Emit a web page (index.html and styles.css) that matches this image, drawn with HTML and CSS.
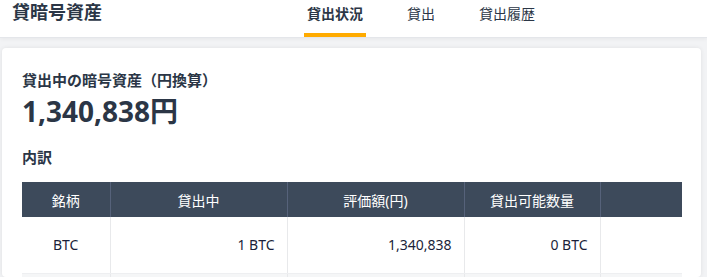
FILE: index.html
```html
<!DOCTYPE html>
<html lang="ja">
<head>
<meta charset="utf-8">
<title>貸暗号資産</title>
<link rel="stylesheet" href="styles.css">
</head>
<body>
<header class="topbar">
  <h1 class="brand">貸暗号資産</h1>
  <nav class="tabs">
    <a class="tab active">貸出状況</a>
    <a class="tab">貸出</a>
    <a class="tab">貸出履歴</a>
  </nav>
</header>
<main class="main">
  <section class="card">
    <h2 class="label">貸出中の暗号資産（円換算）</h2>
    <div class="total">1,340,838円</div>
    <h3 class="sub">内訳</h3>
    <table class="tbl">
      <colgroup>
        <col class="c1"><col class="c2"><col class="c3"><col class="c4"><col class="c5">
      </colgroup>
      <thead>
        <tr><th>銘柄</th><th>貸出中</th><th>評価額(円)</th><th>貸出可能数量</th><th></th></tr>
      </thead>
      <tbody>
        <tr><td class="center">BTC</td><td class="num">1 BTC</td><td class="num">1,340,838</td><td class="num">0 BTC</td><td></td></tr>
        <tr class="alt"><td></td><td></td><td></td><td></td><td></td></tr>
      </tbody>
    </table>
  </section>
</main>
</body>
</html>
```
FILE: styles.css
```css
html, body {
  margin: 0;
  padding: 0;
}
body {
  background: #f2f3f5;
  font-family: "Noto Sans", "Noto Sans CJK JP", sans-serif;
  color: #2b3646;
  overflow: hidden;
  height: 277px;
}
.topbar {
  height: 37px;
  background: #fff;
  border-bottom: 1px solid #e4e6ea;
  box-shadow: 0 1px 4px rgba(0, 0, 0, 0.05);
  display: flex;
  align-items: stretch;
  position: relative;
}
.brand {
  margin: 0;
  padding-left: 12px;
  font-size: 18px;
  font-weight: 700;
  line-height: 24px;
  width: 292px;
  color: #2b3646;
}
.tabs {
  display: flex;
  gap: 38px;
}
.tab {
  display: flex;
  align-items: flex-start;
  padding: 4px 3px 0;
  font-size: 14px;
  line-height: 20px;
  color: #2b3646;
  border-bottom: 4px solid transparent;
  box-sizing: border-box;
  height: 37px;
}
.tab.active {
  font-weight: 700;
  border-bottom-color: #ffab00;
}
.main {
  padding: 10px 6px 0 2px;
}
.card {
  background: #fff;
  border-radius: 4px;
  box-shadow: 0 0 4px rgba(0, 0, 0, 0.08);
  padding: 21px 19px 0 20px;
  height: 208px;
  overflow: hidden;
}
.label {
  margin: 0;
  font-size: 15px;
  font-weight: 700;
  line-height: 22px;
}
.total {
  font-size: 28px;
  font-weight: 700;
  line-height: 36px;
  margin-top: 2px;
}
.sub {
  margin: 17px 0 0;
  font-size: 15px;
  font-weight: 700;
  line-height: 22px;
}
.tbl {
  margin-top: 14px;
  width: 660px;
  border-collapse: collapse;
  table-layout: fixed;
  font-size: 14px;
}
.c1 { width: 88px; }
.c2 { width: 177px; }
.c3 { width: 177px; }
.c4 { width: 136px; }
.c5 { width: 82px; }
.tbl th {
  background: #3d4a5b;
  color: #fff;
  font-weight: 400;
  height: 35px;
  padding: 0;
  text-align: center;
  border-left: 1px solid #56627a;
}
.tbl th:first-child { border-left: none; }
.tbl td {
  height: 56px;
  padding: 0 12px;
  border-left: 1px solid #e8e9eb;
  border-bottom: 1px solid #eeeff1;
  color: #1b1f3a;
  box-sizing: border-box;
}
.tbl td:first-child { border-left: none; }
.tbl td.center { text-align: center; }
.tbl td.num { text-align: right; }
.tbl tr.alt td { background: #f5f6f7; }
```
